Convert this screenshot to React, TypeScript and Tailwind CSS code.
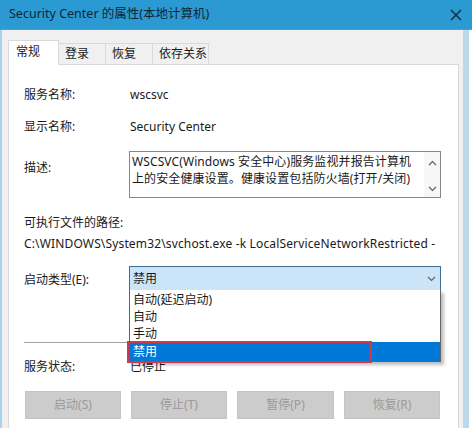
import React from 'react';

const font = "font-['Noto_Sans','Noto_Sans_CJK_SC',sans-serif]";

const Chevron = ({ up = false }: { up?: boolean }) => (
  <svg width="9" height="6" viewBox="0 0 9 6" className={up ? 'rotate-180' : ''}>
    <path d="M1 1 L4.5 4.5 L8 1" fill="none" stroke="#606060" strokeWidth="1.2" />
  </svg>
);

const tabs = ['登录', '恢复', '依存关系'];
const options = ['自动(延迟启动)', '自动', '手动'];
const buttons = [
  { label: '启动(S)', w: 'w-[96px]' },
  { label: '停止(T)', w: 'w-[96px]' },
  { label: '暂停(P)', w: 'w-[97px]' },
  { label: '恢复(R)', w: 'w-[96px]' },
];

export default function App() {
  return (
    <div className={`relative w-[472px] h-[428px] overflow-hidden bg-white text-[12px] text-[#1a1a1a] ${font}`}>
      {/* title bar */}
      <div className="h-[30px] bg-[#2b9ad2] flex items-center justify-between pl-[9px] pr-[10px] border-b border-[#3fa3d8]">
        <span className="text-[12.5px] text-[#0d2638]">Security Center 的属性(本地计算机)</span>
        <svg width="12" height="12" viewBox="0 0 12 12">
          <path d="M1 1 L11 11 M11 1 L1 11" stroke="#16324a" strokeWidth="1.6" />
        </svg>
      </div>

      <div className="flex h-[398px]">
        <div className="w-[463px] bg-[#f0f0f0] border-l-2 border-[#a9d3ec] pl-[6px] pr-[4px] pt-[10px]">
          {/* tabs */}
          <div className="flex items-end h-[24px]">
            <div className="relative z-10 w-[51px] h-[25px] bg-white border border-b-0 border-[#d9d9d9] pl-[7px] pt-[2px] -mb-px">
              常规
            </div>
            {tabs.map((t, i) => (
              <div
                key={t}
                className={`h-[21px] bg-[#f0f0f0] border border-b-0 border-l-0 border-[#d9d9d9] pl-[6px] pt-[1px] ${i === 2 ? 'w-[56px]' : 'w-[47px]'}`}
              >
                {t}
              </div>
            ))}
          </div>

          {/* panel */}
          <div className="h-[370px] bg-white border border-[#d9d9d9] pl-[15px] pr-[17px]">
            <div className="flex items-center h-[16px] mt-[22px]">
              <span className="w-[106px]">服务名称:</span>
              <span>wscsvc</span>
            </div>
            <div className="flex items-center h-[16px] mt-[16px]">
              <span className="w-[106px]">显示名称:</span>
              <span>Security Center</span>
            </div>
            <div className="flex mt-[16px]">
              <span className="w-[105px] pt-[8px]">描述:</span>
              <div className="flex-1 h-[47px] border border-[#828790] flex">
                <div className="flex-1 pl-[2px] pt-[1px] leading-[17px] tracking-[0.1px]">
                  <div>WSCSVC(Windows 安全中心)服务监视并报告计算机</div>
                  <div>上的安全健康设置。健康设置包括防火墙(打开/关闭)</div>
                </div>
                <div className="w-[16px] flex flex-col items-center justify-between pt-[8px] pb-[5px] bg-[#f7f7f7]">
                  <Chevron up />
                  <Chevron />
                </div>
              </div>
            </div>
            <div className="h-[16px] mt-[17px] flex items-center">可执行文件的路径:</div>
            <div className="h-[16px] mt-[5px] flex items-center whitespace-nowrap overflow-hidden tracking-[0.15px]">
              C:\WINDOWS\System32\svchost.exe -k LocalServiceNetworkRestricted -
            </div>
            <div className="flex mt-[14px]">
              <span className="w-[105px] pt-[5px]">启动类型(E):</span>
              <div className="flex-1 h-[25px] bg-[#cce4f7] border border-[#3f6f93] flex items-center justify-between pl-[3px] pr-[4px]">
                <span>禁用</span>
                <Chevron />
              </div>
            </div>
            <div className="mt-[51px] border-t border-[#a0a0a0]" />
            <div className="flex items-center h-[16px] mt-[16px]">
              <span className="w-[106px]">服务状态:</span>
              <span>已停止</span>
            </div>
            <div className="flex gap-[10px] mt-[16px] ml-px">
              {buttons.map((b) => (
                <div
                  key={b.label}
                  className={`${b.w} h-[28px] bg-[#cccccc] border border-[#c4c4c4] flex items-center justify-center text-[#9a9a9a]`}
                >
                  {b.label}
                </div>
              ))}
            </div>
          </div>
        </div>
        <div className="w-[6px] bg-[#bcd9ea]" />
        <div className="flex-1 bg-white" />
      </div>

      {/* open dropdown list */}
      <div className="absolute left-[129px] top-[290px] w-[312px] h-[72px] bg-white border border-[#646464] border-t-0 shadow-[3px_3px_3px_rgba(0,0,0,0.25)] flex flex-col pt-[1px]">
        {options.map((o) => (
          <div key={o} className="h-[17px] pl-[3px] flex items-center">
            {o}
          </div>
        ))}
        <div className="h-[20px] bg-[#0078d7] text-white pl-[3px] flex items-center">禁用</div>
      </div>
      {/* highlight box */}
      <div className="absolute left-[127px] top-[341px] w-[245px] h-[22px] border-2 border-[#d0384b]" />
    </div>
  );
}
